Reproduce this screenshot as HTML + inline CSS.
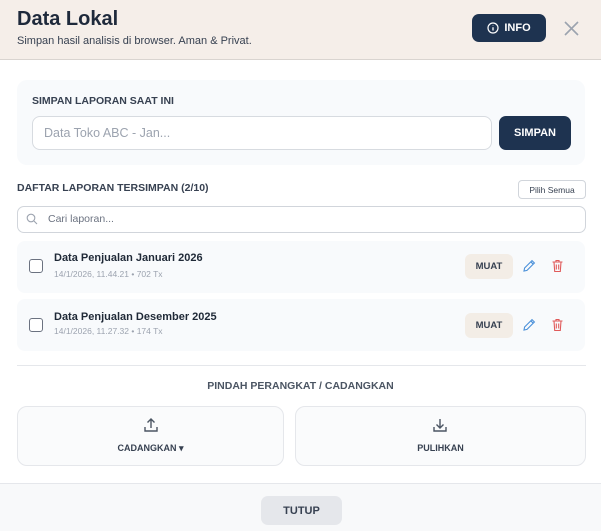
<!DOCTYPE html>
<html><head><style>
*{box-sizing:border-box;margin:0;padding:0}
body{width:601px;height:531px;font-family:"Liberation Sans",sans-serif;background:#fff;position:relative;overflow:hidden;color:#1f2937}
.a{position:absolute}
.hdr{left:0;top:0;width:601px;height:60px;background:#f5eee9;border-bottom:1px solid #d9d4d0}
h1{position:absolute;left:17px;top:8px;font-size:20px;font-weight:bold;color:#1e293b}
.sub{left:17px;top:35px;font-size:11px;color:#374151}
.info{left:472px;top:14px;width:74px;height:28px;background:#1e3350;border-radius:7px;color:#fff;font-size:11px;font-weight:bold;display:flex;align-items:center;justify-content:center;gap:5px}
.card{left:17px;top:80px;width:568px;height:85px;background:#f8fafc;border-radius:10px}
.lbl{font-size:10.5px;font-weight:bold;color:#374151}
.inp{left:32px;top:116px;width:460px;height:34px;border:1px solid #d7dbe0;border-radius:8px;background:#fff;font-size:12.5px;color:#9ca3af;padding:9px 11px}
.btn{left:499px;top:116px;width:72px;height:34px;background:#1e3350;border-radius:7px;color:#fff;font-size:11px;font-weight:bold;display:flex;align-items:center;justify-content:center}
.ps{left:518px;top:180px;width:68px;height:19px;border:1px solid #d1d5db;border-radius:4px;font-size:8.5px;display:flex;align-items:center;justify-content:center;color:#374151}
.srch{left:17px;top:206px;width:569px;height:27px;border:1px solid #d1d5db;border-radius:7px;font-size:10.5px;color:#6b7280;padding:6px 0 0 30px}
.row{left:17px;width:568px;height:52px;background:#f8fafc;border-radius:8px}
.cb{width:14px;height:14px;border:1.5px solid #6b7280;border-radius:3px;background:#fff}
.t{font-size:11px;font-weight:bold;color:#1f2937}
.m{font-size:8.5px;color:#9ca3af}
.muat{width:48px;height:25px;background:#f3ede6;border-radius:6px;font-size:9.5px;font-weight:bold;display:flex;align-items:center;justify-content:center;color:#374151}
.box{top:406px;height:60px;border:1px solid #e5e7eb;border-radius:10px;background:#fafbfc}
.foot{left:0;top:483px;width:601px;height:48px;background:#f8f9fa;border-top:1px solid #e5e7eb}
.tutup{left:261px;top:496px;width:81px;height:29px;background:#e5e7eb;border-radius:7px;font-size:11px;font-weight:bold;display:flex;align-items:center;justify-content:center;color:#374151}
</style></head><body>
<div class="a hdr"></div>
<h1>Data Lokal</h1>
<div class="a sub">Simpan hasil analisis di browser. Aman &amp; Privat.</div>
<div class="a info"><svg width="12" height="12" viewBox="0 0 12 12"><circle cx="6" cy="6" r="5" fill="none" stroke="#fff" stroke-width="1.2"/><path d="M6 5.3v3.2M6 3.4v.4" stroke="#fff" stroke-width="1.3"/></svg>INFO</div>
<svg class="a" style="left:564px;top:21px" width="15" height="15" viewBox="0 0 15 15"><path d="M1 1L14 14M14 1L1 14" stroke="#9ca3af" stroke-width="1.6"/></svg>
<div class="a card"></div>
<div class="a lbl" style="left:32px;top:95px">SIMPAN LAPORAN SAAT INI</div>
<div class="a inp">Data Toko ABC - Jan...</div>
<div class="a btn">SIMPAN</div>
<div class="a lbl" style="left:17px;top:182px">DAFTAR LAPORAN TERSIMPAN (2/10)</div>
<div class="a ps">Pilih Semua</div>
<div class="a srch">Cari laporan...</div>
<svg class="a" style="left:26px;top:213px" width="12" height="12" viewBox="0 0 12 12"><circle cx="5" cy="5" r="3.8" fill="none" stroke="#9ca3af" stroke-width="1.1"/><path d="M8 8l3 3" stroke="#9ca3af" stroke-width="1.1"/></svg>

<div class="a row" style="top:241px"></div>
<div class="a row" style="top:299px"></div>

<div class="a cb" style="left:29px;top:259px"></div>
<div class="a t" style="left:54px;top:252px">Data Penjualan Januari 2026</div>
<div class="a m" style="left:54px;top:269px">14/1/2026, 11.44.21 • 702 Tx</div>
<div class="a muat" style="left:465px;top:254px">MUAT</div>
<div class="a cb" style="left:29px;top:318px"></div>
<div class="a t" style="left:54px;top:311px">Data Penjualan Desember 2025</div>
<div class="a m" style="left:54px;top:326px">14/1/2026, 11.27.32 • 174 Tx</div>
<div class="a muat" style="left:465px;top:313px">MUAT</div>

<svg class="a" style="left:522px;top:259px" width="14" height="14" viewBox="0 0 14 14"><path d="M2 12l.6-3L10 1.6l2.4 2.4L5 11.4z M8.8 2.8l2.4 2.4" fill="none" stroke="#4a90d9" stroke-width="1.1"/></svg>
<svg class="a" style="left:551px;top:259px" width="13" height="14" viewBox="0 0 13 14"><path d="M1.5 3h10M5 3V1.5h3V3M3 3l.7 9.5h5.6L10 3M5.3 5.5v5M7.7 5.5v5" fill="none" stroke="#e05a5a" stroke-width="1.1"/></svg>
<svg class="a" style="left:522px;top:318px" width="14" height="14" viewBox="0 0 14 14"><path d="M2 12l.6-3L10 1.6l2.4 2.4L5 11.4z M8.8 2.8l2.4 2.4" fill="none" stroke="#4a90d9" stroke-width="1.1"/></svg>
<svg class="a" style="left:551px;top:318px" width="13" height="14" viewBox="0 0 13 14"><path d="M1.5 3h10M5 3V1.5h3V3M3 3l.7 9.5h5.6L10 3M5.3 5.5v5M7.7 5.5v5" fill="none" stroke="#e05a5a" stroke-width="1.1"/></svg>

<div class="a" style="left:17px;top:365px;width:569px;height:1px;background:#e5e7eb"></div>
<div class="a lbl" style="left:0;width:601px;text-align:center;top:380px;color:#4b5563">PINDAH PERANGKAT / CADANGKAN</div>
<div class="a box" style="left:17px;width:267px"></div>
<div class="a box" style="left:295px;width:291px"></div>
<svg class="a" style="left:143px;top:417px" width="16" height="16" viewBox="0 0 16 16"><path d="M8 11V2M4.5 5.5L8 2l3.5 3.5M2 10v4h12v-4" fill="none" stroke="#4b5563" stroke-width="1.4"/></svg>
<svg class="a" style="left:432px;top:417px" width="16" height="16" viewBox="0 0 16 16"><path d="M8 2v9M4.5 7.5L8 11l3.5-3.5M2 10v4h12v-4" fill="none" stroke="#4b5563" stroke-width="1.4"/></svg>
<div class="a" style="left:17px;width:267px;top:443px;text-align:center;font-size:9px;font-weight:bold;color:#374151">CADANGKAN ▾</div>
<div class="a" style="left:295px;width:291px;top:443px;text-align:center;font-size:9px;font-weight:bold;color:#374151">PULIHKAN</div>

<div class="a foot"></div>
<div class="a tutup">TUTUP</div>
</body></html>
